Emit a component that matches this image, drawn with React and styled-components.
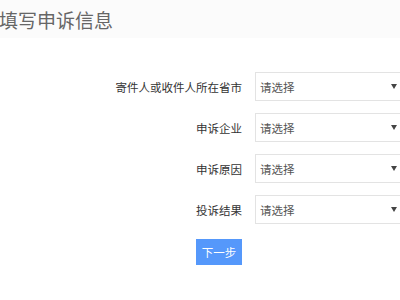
import React from 'react';
import styled, { createGlobalStyle } from 'styled-components';

const Global = createGlobalStyle`
  html, body {
    margin: 0;
    padding: 0;
    background: #fff;
    overflow: hidden;
    font-family: "Noto Sans CJK SC", "Noto Sans", sans-serif;
  }
`;

const Page = styled.div`
  width: 400px;
  height: 300px;
  overflow: hidden;
`;

const Header = styled.div`
  height: 38px;
  background: #fbfbfb;
  display: flex;
  align-items: center;
`;

const Title = styled.h1`
  margin: 0 0 0 -1px;
  font-size: 19px;
  font-weight: 400;
  color: #666;
`;

const Form = styled.div`
  display: flex;
  flex-direction: column;
  gap: 12px;
  padding-top: 34px;
`;

const Row = styled.div`
  display: flex;
  align-items: center;
  height: 29px;
`;

const Label = styled.label`
  width: 242px;
  flex-shrink: 0;
  text-align: right;
  font-size: 11.5px;
  color: #333;
`;

const Select = styled.div`
  margin-left: 13px;
  width: 170px;
  flex-shrink: 0;
  height: 29px;
  box-sizing: border-box;
  border: 1px solid #e3e3e3;
  display: flex;
  align-items: center;
  padding-left: 4px;
  font-size: 11.5px;
  color: #555;
  position: relative;
`;

const Arrow = styled.span`
  position: absolute;
  left: 135px;
  top: 11px;
  width: 0;
  height: 0;
  border-left: 3px solid transparent;
  border-right: 3px solid transparent;
  border-top: 5px solid #444;
`;

const Actions = styled.div`
  padding: 2px 0 0 196px;
`;

const Button = styled.button`
  width: 46px;
  height: 26px;
  border: none;
  background: #5598fb;
  color: #fff;
  font-family: inherit;
  font-size: 11.5px;
  padding: 0;
`;

const fields = ['寄件人或收件人所在省市', '申诉企业', '申诉原因', '投诉结果'];

export default function App() {
  return (
    <Page>
      <Global />
      <Header>
        <Title>填写申诉信息</Title>
      </Header>
      <Form>
        {fields.map((f) => (
          <Row key={f}>
            <Label>{f}</Label>
            <Select>
              请选择
              <Arrow />
            </Select>
          </Row>
        ))}
        <Actions>
          <Button>下一步</Button>
        </Actions>
      </Form>
    </Page>
  );
}
